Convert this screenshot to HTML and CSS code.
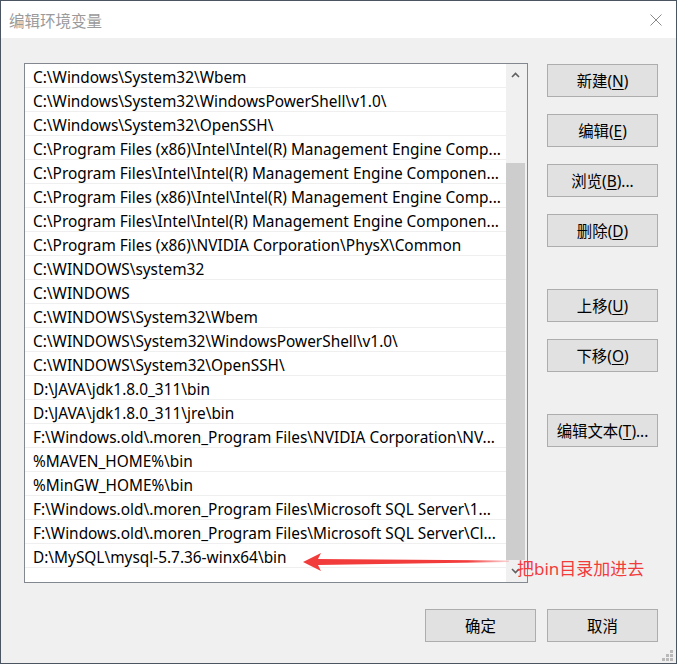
FILE: index.html
```html
<!DOCTYPE html>
<html lang="zh-CN">
<head>
    <meta charset="UTF-8">
    <title>编辑环境变量</title>
    <link rel="stylesheet" href="styles.css">
</head>
<body>
    <div class="window">
        <!-- barra de título -->
        <div class="titlebar">
            <span class="title">编辑环境变量</span>
            <svg class="close" width="12" height="12" viewBox="0 0 12 12">
                <path d="M0.5 0.5 L11.5 11.5 M11.5 0.5 L0.5 11.5" stroke="#8a8a8a" stroke-width="1" fill="none"/>
            </svg>
        </div>

        <div class="content">
            <div class="main">
                <div class="list">
                    <div class="rows">
                        <div class="row">C:\Windows\System32\Wbem</div>
                        <div class="row">C:\Windows\System32\WindowsPowerShell\v1.0\</div>
                        <div class="row">C:\Windows\System32\OpenSSH\</div>
                        <div class="row">C:\Program Files (x86)\Intel\Intel(R) Management Engine Comp...</div>
                        <div class="row">C:\Program Files\Intel\Intel(R) Management Engine Componen...</div>
                        <div class="row">C:\Program Files (x86)\Intel\Intel(R) Management Engine Comp...</div>
                        <div class="row">C:\Program Files\Intel\Intel(R) Management Engine Componen...</div>
                        <div class="row">C:\Program Files (x86)\NVIDIA Corporation\PhysX\Common</div>
                        <div class="row">C:\WINDOWS\system32</div>
                        <div class="row">C:\WINDOWS</div>
                        <div class="row">C:\WINDOWS\System32\Wbem</div>
                        <div class="row">C:\WINDOWS\System32\WindowsPowerShell\v1.0\</div>
                        <div class="row">C:\WINDOWS\System32\OpenSSH\</div>
                        <div class="row">D:\JAVA\jdk1.8.0_311\bin</div>
                        <div class="row">D:\JAVA\jdk1.8.0_311\jre\bin</div>
                        <div class="row">F:\Windows.old\.moren_Program Files\NVIDIA Corporation\NV...</div>
                        <div class="row">%MAVEN_HOME%\bin</div>
                        <div class="row">%MinGW_HOME%\bin</div>
                        <div class="row">F:\Windows.old\.moren_Program Files\Microsoft SQL Server\1...</div>
                        <div class="row">F:\Windows.old\.moren_Program Files\Microsoft SQL Server\Cl...</div>
                        <div class="row">D:\MySQL\mysql-5.7.36-winx64\bin</div>
                    </div>
                    <div class="scrollbar">
                        <div class="scroll-btn">
                            <svg width="9" height="6" viewBox="0 0 9 6"><path d="M1 5 L4.5 1.5 L8 5" stroke="#606060" stroke-width="1.6" fill="none"/></svg>
                        </div>
                        <div class="track">
                            <div class="thumb"></div>
                        </div>
                        <div class="scroll-btn">
                            <svg width="9" height="6" viewBox="0 0 9 6"><path d="M1 1 L4.5 4.5 L8 1" stroke="#606060" stroke-width="1.6" fill="none"/></svg>
                        </div>
                    </div>
                </div>

                <div class="actions">
                    <button class="btn">新建(<u>N</u>)</button>
                    <button class="btn">编辑(<u>E</u>)</button>
                    <button class="btn">浏览(<u>B</u>)...</button>
                    <button class="btn">删除(<u>D</u>)</button>
                    <button class="btn group">上移(<u>U</u>)</button>
                    <button class="btn">下移(<u>O</u>)</button>
                    <button class="btn group">编辑文本(<u>T</u>)...</button>
                </div>
            </div>

            <div class="footer">
                <button class="btn">确定</button>
                <button class="btn">取消</button>
            </div>
        </div>

        <!-- anotación encima de la lista -->
        <svg class="arrow" width="210" height="22" viewBox="0 0 210 22">
            <defs>
                <linearGradient id="cola" x1="0" x2="1" y1="0" y2="0">
                    <stop offset="0" stop-color="#f23c3c"/>
                    <stop offset="0.8" stop-color="#f23c3c"/>
                    <stop offset="1" stop-color="#f23c3c" stop-opacity="0.2"/>
                </linearGradient>
            </defs>
            <polygon fill="url(#cola)" points="1,11 19,2 16,8 207,9.5 207,11 16,14 19,20"/>
        </svg>
        <span class="note">把bin目录加进去</span>

        <svg class="grip" width="12" height="12" viewBox="0 0 12 12">
            <rect x="8" y="0" width="3" height="3" fill="#b9b9b9"/>
            <rect x="4" y="4" width="3" height="3" fill="#b9b9b9"/>
            <rect x="8" y="4" width="3" height="3" fill="#b9b9b9"/>
            <rect x="0" y="8" width="3" height="3" fill="#b9b9b9"/>
            <rect x="4" y="8" width="3" height="3" fill="#b9b9b9"/>
            <rect x="8" y="8" width="3" height="3" fill="#b9b9b9"/>
        </svg>
    </div>
</body>
</html>
```

FILE: styles.css
```css
body {
    margin: 0;
    background-color: #4a5561; /* escritorio detrás de la ventana */
    font-family: "Noto Sans", "Noto Sans CJK SC", sans-serif;
    font-size: 15px;
    color: #000;
}

.window {
    position: relative;
    width: 675px;
    height: 662px;
    margin: 1px;
    background-color: #f0f0f0;
    display: flex;
    flex-direction: column;
}

.titlebar {
    height: 37px;
    background-color: #fff;
    display: flex;
    align-items: center;
    justify-content: space-between;
    padding: 0 14px 0 8px;
}

.title {
    color: #9a9a9a;
    font-family: "Noto Sans CJK SC", sans-serif;
    font-size: 15.5px;
}

.content {
    padding: 25px 18px 0 23px;
}

.main {
    display: flex;
    gap: 19px;
}

.list {
    width: 504px;
    height: 520px;
    box-sizing: border-box;
    border: 1px solid #828790;
    background-color: #fff;
    display: flex;
}

.rows {
    width: 481px;
    overflow: hidden;
}

.row {
    height: 24px;
    box-sizing: border-box;
    border-bottom: 1px solid #efefef;
    padding: 2px 0 0 8px;
    font-size: 15.4px;
    line-height: 23px;
    white-space: nowrap;
}

.scrollbar {
    width: 21px;
    background-color: #f0f0f0;
    display: flex;
    flex-direction: column;
}

.scroll-btn {
    height: 22px;
    display: flex;
    align-items: center;
    justify-content: center;
    padding-right: 2px;
}

.track {
    flex: 1;
    display: flex;
    flex-direction: column;
    justify-content: flex-end;
}

.thumb {
    width: 19px;
    height: 397px;
    background-color: #cdcdcd;
}

.actions {
    width: 111px;
    padding-top: 1px;
    display: flex;
    flex-direction: column;
}

.btn {
    width: 111px;
    height: 33px;
    box-sizing: border-box;
    border: 1px solid #adadad;
    background-color: #e1e1e1;
    font-family: "Noto Sans", "Noto Sans CJK SC", sans-serif;
    font-size: 15.4px;
    color: #000;
    padding: 0;
    margin-bottom: 17px;
}

.btn u {
    text-underline-offset: 2px;
}

.btn.group {
    margin-top: 25px;
}

.footer {
    display: flex;
    justify-content: flex-end;
    gap: 11px;
    margin-top: 26px;
}

.footer .btn {
    margin-bottom: 0;
}

.arrow {
    position: absolute;
    left: 301px;
    top: 550px;
}

.note {
    position: absolute;
    left: 516px;
    top: 556px;
    color: #f23c3c;
    font-family: "Noto Sans", "Noto Sans CJK SC", sans-serif;
    font-size: 17px;
    line-height: 24px;
}

.grip {
    position: absolute;
    right: 2px;
    bottom: 1px;
}
```
